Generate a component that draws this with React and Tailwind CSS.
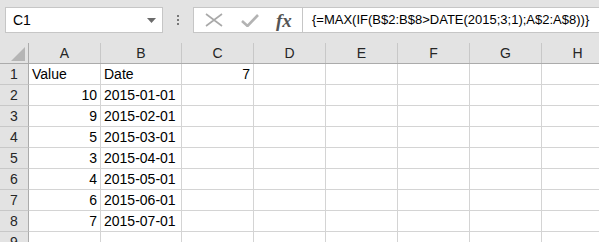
import React from "react";

const cols = [
  { key: "A", w: "w-[72px]" },
  { key: "B", w: "w-[81px]" },
  { key: "C", w: "w-[72px]" },
  { key: "D", w: "w-[72px]" },
  { key: "E", w: "w-[72px]" },
  { key: "F", w: "w-[72px]" },
  { key: "G", w: "w-[72px]" },
  { key: "H", w: "w-[72px]" },
];

const rows = [
  { n: 1, A: "Value", B: "Date", C: "7", left: { A: true, B: true } },
  { n: 2, A: "10", B: "2015-01-01" },
  { n: 3, A: "9", B: "2015-02-01" },
  { n: 4, A: "5", B: "2015-03-01" },
  { n: 5, A: "3", B: "2015-04-01" },
  { n: 6, A: "4", B: "2015-05-01" },
  { n: 7, A: "6", B: "2015-06-01" },
  { n: 8, A: "7", B: "2015-07-01" },
  { n: 9 },
];

function FormulaBar() {
  return (
    <div className="flex h-[43px] shrink-0 items-start bg-[#e3e3e3] pt-[7px] pl-[5px]">
      {/* name box */}
      <div className="flex h-[26px] w-[158px] shrink-0 items-center justify-between border border-[#c6c6c6] bg-white pl-[7px] pr-[6px] text-[14px] text-black">
        <span>C1</span>
        <svg width="9" height="5" viewBox="0 0 9 5">
          <polygon points="0,0 9,0 4.5,5" fill="#6b6b6b" />
        </svg>
      </div>
      <div className="flex h-[26px] w-[30px] shrink-0 flex-col items-center justify-center gap-[2px]">
        <div className="h-[2px] w-[2px] bg-[#777]"></div>
        <div className="h-[2px] w-[2px] bg-[#777]"></div>
        <div className="h-[2px] w-[2px] bg-[#777]"></div>
      </div>
      {/* formula box */}
      <div className="-mr-[4px] flex h-[26px] flex-1 border border-[#c6c6c6] bg-white">
        <div className="flex w-[109px] shrink-0 items-center border-r border-[#c6c6c6]">
          <svg width="18" height="14" viewBox="0 0 18 14" className="ml-[11px]">
            <path d="M1 1 L17 13 M17 1 L1 13" stroke="#a9a9a9" strokeWidth="1.6" fill="none" />
          </svg>
          <svg width="18" height="13" viewBox="0 0 18 13" className="ml-[18px]">
            <path d="M1 7 L6.5 12 L17 1" stroke="#b3b3b3" strokeWidth="2.6" fill="none" />
          </svg>
          <span className="ml-[17px] font-['Liberation_Serif',serif] text-[19px] font-bold italic leading-none text-[#555]">
            fx
          </span>
        </div>
        <div className="flex items-center pl-[9px] text-[13px] whitespace-nowrap text-black">
          {"{=MAX(IF(B$2:B$8>DATE(2015;3;1);A$2:A$8))}"}
        </div>
      </div>
    </div>
  );
}

function HeaderRow() {
  return (
    <div className="flex h-[21px] shrink-0 border-b border-[#ababab] bg-[#e3e3e3]">
      <div className="relative w-[29px] shrink-0 border-r border-[#ababab]">
        <svg width="15" height="14" viewBox="0 0 15 14" className="absolute right-[2px] bottom-[2px]">
          <polygon points="14,0 14,14 0,14" fill="#b5b5b5" />
        </svg>
      </div>
      {cols.map((c) => (
        <div
          key={c.key}
          className={`${c.w} flex shrink-0 items-center justify-center border-r border-[#c8c8c8] text-[14px] text-[#262626]`}
        >
          {c.key}
        </div>
      ))}
    </div>
  );
}

export default function App() {
  return (
    <div className="flex h-[242px] w-[599px] flex-col overflow-hidden bg-white font-['Liberation_Sans',Arial,sans-serif]">
      <FormulaBar />
      <HeaderRow />
      {rows.map((r) => (
        <div key={r.n} className="flex h-[21px] shrink-0">
          <div className="flex w-[29px] shrink-0 items-center justify-center border-r border-b border-r-[#ababab] border-b-[#c8c8c8] bg-[#e3e3e3] text-[14px] text-[#262626]">
            {r.n}
          </div>
          {cols.map((c) => {
            const v = r[c.key];
            const isLeft = r.left && r.left[c.key];
            const isNum = v && !isLeft && !/-/.test(v);
            return (
              <div
                key={c.key}
                className={`${c.w} flex shrink-0 items-center overflow-visible border-r border-b border-[#d4d4d4] px-[3px] text-[14px] whitespace-nowrap text-black ${
                  isNum ? "justify-end" : "justify-start"
                }`}
              >
                {v}
              </div>
            );
          })}
        </div>
      ))}
    </div>
  );
}
